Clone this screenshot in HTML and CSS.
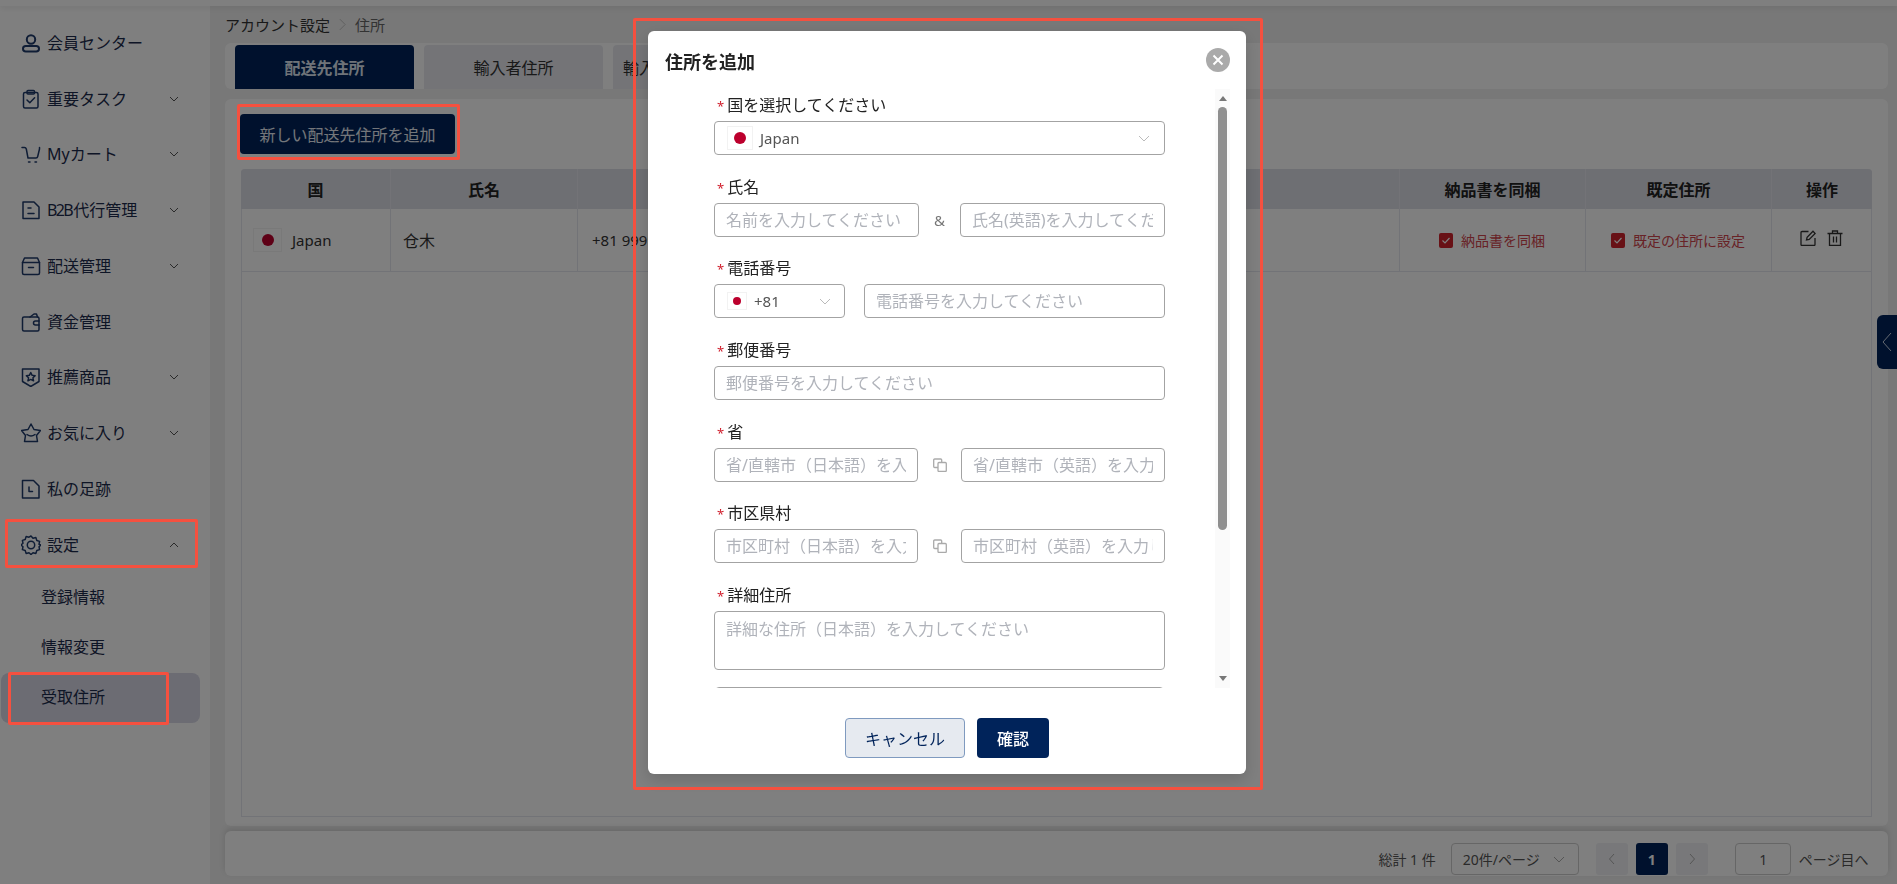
FILE: index.html
```html
<!DOCTYPE html>
<html lang="ja">
<head>
<meta charset="utf-8">
<title>住所</title>
<link rel="stylesheet" href="styles.css">
</head>
<body>
<div class="page">
  <div class="topbar"></div>
  <div class="layout">
    <aside class="sidebar">
      <div class="nav-item"><svg class="nav-icon icon-bold" viewBox="0 0 20 20"><circle cx="10" cy="6.500" r="4.200"/><rect x="2" y="13" width="16" height="5.500" rx="2.800"/></svg><span>会員センター</span></div>
      <div class="nav-item"><svg class="nav-icon" viewBox="0 0 20 20"><rect x="2.500" y="3.500" width="14.500" height="15.500" rx="1.500"/><rect x="6" y="1.500" width="7.500" height="3.500" rx="1"/><path d="M6 11l2.800 2.800 4.800-5"/></svg><span>重要タスク</span><svg class="chev" viewBox="0 0 10 10"><path d="M1 3l4 4 4-4"/></svg></div>
      <div class="nav-item"><svg class="nav-icon" viewBox="0 0 20 20"><path d="M1 3.500h2.500c1 0 1.500.5 1.800 1.500L7 14h8c1 0 1.500-.5 1.700-1.500L18.500 5V3.500"/><path class="dot" d="M7.500 18h1.500M14 18h1.500"/></svg><span>Myカート</span><svg class="chev" viewBox="0 0 10 10"><path d="M1 3l4 4 4-4"/></svg></div>
      <div class="nav-item"><svg class="nav-icon" viewBox="0 0 20 20"><path d="M2 2h11l5 5v11.500H2z"/><path d="M7 8h3M7 13.500h6"/></svg><span><span class="tight">B2B</span>代行管理</span><svg class="chev" viewBox="0 0 10 10"><path d="M1 3l4 4 4-4"/></svg></div>
      <div class="nav-item"><svg class="nav-icon" viewBox="0 0 20 20"><path d="M1.500 6.500V17A1.500 1.500 0 0 0 3 18.500h14a1.500 1.500 0 0 0 1.500-1.500V6.500"/><path d="M1.500 6.500L3.500 2h13l2 4.500z"/><path d="M7.500 11.500h5"/></svg><span>配送管理</span><svg class="chev" viewBox="0 0 10 10"><path d="M1 3l4 4 4-4"/></svg></div>
      <div class="nav-item"><svg class="nav-icon" viewBox="0 0 20 20"><rect x="1.500" y="5" width="16.500" height="14" rx="1.500"/><path d="M9 5l4-3h2.500l1 3"/><path d="M18 9h-3.500a2 2 0 0 0 0 4H18"/></svg><span>資金管理</span></div>
      <div class="nav-item"><svg class="nav-icon" viewBox="0 0 20 20"><path d="M1.500 2h16.500v12.500l-8.250 5-8.250-5z"/><path d="M9.750 5.500l1.400 2.800 3 .4-2.200 2.100.6 3-2.800-1.400-2.800 1.400.6-3-2.200-2.100 3-.4z"/></svg><span>推薦商品</span><svg class="chev" viewBox="0 0 10 10"><path d="M1 3l4 4 4-4"/></svg></div>
      <div class="nav-item"><svg class="nav-icon" viewBox="0 0 20 20"><path d="M10 1l3 5.500 6.500 1-4 5 1 6H3.500l1-6-4-5 6.500-1z"/><path d="M6 11.500q4 3 8 0"/></svg><span>お気に入り</span><svg class="chev" viewBox="0 0 10 10"><path d="M1 3l4 4 4-4"/></svg></div>
      <div class="nav-item"><svg class="nav-icon" viewBox="0 0 20 20"><path d="M1.500 1.500h11l5.500 5.500v12H1.500z"/><path d="M8 8v4.500h3.500"/></svg><span>私の足跡</span></div>
      <div class="nav-item"><svg class="nav-icon" viewBox="0 0 20 20"><path d="M10 1l2 2.200 2.900-.6.900 2.900 2.800.9-.6 2.900L20 10l-2 1.700.6 2.900-2.800.9-.9 2.900-2.900-.6L10 19.500l-2-1.700-2.900.6-.9-2.900-2.800-.9.6-2.900L0 10l2-1.700-.6-2.900 2.800-.9.900-2.900 2.900.6z"/><circle cx="10" cy="10" r="3.700"/></svg><span>設定</span><svg class="chev" viewBox="0 0 10 10"><path d="M1 7l4-4 4 4"/></svg></div>
      <div class="sub-item">登録情報</div>
      <div class="sub-item">情報変更</div>
      <div class="sub-item active">受取住所</div>
    </aside>
    <main class="main">
      <div class="breadcrumb"><span>アカウント設定</span><svg class="crumb-sep" viewBox="0 0 10 14"><path d="M2 1l6 6-6 6"/></svg><span class="crumb-now">住所</span></div>
      <div class="tabs">
        <div class="tab current">配送先住所</div>
        <div class="tab">輸入者住所</div>
        <div class="tab tab-cut">輸入</div>
      </div>
      <section class="card">
        <button class="add-btn" type="button">新しい配送先住所を追加</button>
        <div class="table">
          <div class="thead">
            <div class="th">国</div><div class="th">氏名</div><div class="th">電話番号</div><div class="th">住所</div><div class="th">納品書を同梱</div><div class="th">既定住所</div><div class="th">操作</div>
          </div>
          <div class="trow">
            <div class="td"><span class="flag flag-row"><i></i></span><span class="td-country">Japan</span></div>
            <div class="td td-name">仓木</div>
            <div class="td td-phone">+81 9999999999</div>
            <div class="td"></div>
            <div class="td td-check"><span class="check"><svg viewBox="0 0 14 14"><path d="M3.500 7l2.500 2.500 4.500-5"/></svg></span>納品書を同梱</div>
            <div class="td td-check"><span class="check"><svg viewBox="0 0 14 14"><path d="M3.500 7l2.500 2.500 4.500-5"/></svg></span>既定の住所に設定</div>
            <div class="td td-actions">
              <svg class="act" viewBox="0 0 16 16"><path d="M8.500 1.500H2a1 1 0 0 0-1 1v12a1 1 0 0 0 1 1h12a1 1 0 0 0 1-1V8"/><path d="M6.500 10l.6-2.600L13 1.300l2.200 2.200L9.200 9.500z"/></svg>
              <svg class="act" viewBox="0 0 16 16"><path d="M.5 3.500h15M5.500 3.500V1h5v2.500"/><path d="M2.500 3.500v12h11v-12"/><path d="M6.500 6.500v6M9.500 6.500v6"/></svg>
            </div>
          </div>
        </div>
      </section>
      <footer class="pager">
        <span class="pg-total">総計 1 件</span>
        <div class="pg-size"><span>20件/ページ</span><svg class="pg-chev" viewBox="0 0 10 10"><path d="M0 3l5 5 5-5"/></svg></div>
        <div class="pg-btn"><svg class="pg-arrow" viewBox="0 0 8 12"><path d="M6 1L1.500 6 6 11"/></svg></div>
        <div class="pg-btn pg-on">1</div>
        <div class="pg-btn"><svg class="pg-arrow" viewBox="0 0 8 12"><path d="M2 1l4.500 5L2 11"/></svg></div>
        <div class="pg-jump">1</div>
        <span class="pg-text">ページ目へ</span>
      </footer>
    </main>
  </div>
  <div class="side-toggle"><svg viewBox="0 0 10 20"><path d="M9 1L1 10l8 9"/></svg></div>
</div>

<div class="overlay"></div>

<div class="modal">
  <header class="modal-head">
    <h2 class="modal-title">住所を追加</h2>
    <span class="modal-close"><svg viewBox="0 0 12 12"><path d="M1.500 1.500l9 9M10.500 1.500l-9 9"/></svg></span>
  </header>
  <div class="modal-body">
    <form class="form">
      <div class="form-item">
        <label class="label"><em>*</em>国を選択してください</label>
        <div class="select"><span class="flag flag-big"><i></i></span><span class="select-text">Japan</span><svg class="sel-chev" viewBox="0 0 10 10"><path d="M0 3l5 5 5-5"/></svg></div>
      </div>
      <div class="form-item">
        <label class="label"><em>*</em>氏名</label>
        <div class="pair"><input class="input" placeholder="名前を入力してください"><span class="joiner">&amp;</span><input class="input" placeholder="氏名(英語)を入力してください"></div>
      </div>
      <div class="form-item">
        <label class="label"><em>*</em>電話番号</label>
        <div class="phone">
          <div class="select select-code"><span class="flag flag-small"><i></i></span><span class="select-text code">+81</span><svg class="sel-chev" viewBox="0 0 10 10"><path d="M0 3l5 5 5-5"/></svg></div>
          <input class="input" placeholder="電話番号を入力してください">
        </div>
      </div>
      <div class="form-item">
        <label class="label"><em>*</em>郵便番号</label>
        <input class="input" placeholder="郵便番号を入力してください">
      </div>
      <div class="form-item">
        <label class="label"><em>*</em>省</label>
        <div class="pair wide"><input class="input" placeholder="省/直轄市（日本語）を入力してください"><span class="joiner"><svg class="copy" viewBox="0 0 14 14"><path d="M8.700 4V2a1 1 0 0 0-1-1H1.700a1 1 0 0 0-1 1v6.500a1 1 0 0 0 1 1H5"/><rect x="5" y="4.500" width="8.300" height="9" rx="1"/></svg></span><input class="input" placeholder="省/直轄市（英語）を入力してください"></div>
      </div>
      <div class="form-item">
        <label class="label"><em>*</em>市区県村</label>
        <div class="pair wide"><input class="input" placeholder="市区町村（日本語）を入力してください"><span class="joiner"><svg class="copy" viewBox="0 0 14 14"><path d="M8.700 4V2a1 1 0 0 0-1-1H1.700a1 1 0 0 0-1 1v6.500a1 1 0 0 0 1 1H5"/><rect x="5" y="4.500" width="8.300" height="9" rx="1"/></svg></span><input class="input" placeholder="市区町村（英語）を入力してください"></div>
      </div>
      <div class="form-item">
        <label class="label"><em>*</em>詳細住所</label>
        <textarea class="input textarea" placeholder="詳細な住所（日本語）を入力してください"></textarea>
      </div>
      <input class="input input-next">
    </form>
    <div class="scrollbar">
      <span class="sb-up"></span>
      <span class="sb-thumb"></span>
      <span class="sb-down"></span>
    </div>
  </div>
  <footer class="modal-foot">
    <button class="btn-cancel" type="button">キャンセル</button>
    <button class="btn-ok" type="button">確認</button>
  </footer>
</div>

<div class="mark mark-modal"></div>
<div class="mark mark-add"></div>
<div class="mark mark-settings"></div>
<div class="mark mark-sub"></div>
</body>
</html>
```
FILE: styles.css
```css
* { box-sizing: border-box; }
html, body { margin: 0; padding: 0; height: 884px; overflow: hidden; }
body { font-family: "Noto Sans", "Noto Sans CJK JP", sans-serif; font-size: 16px; color: #222; background: #fff; }

.page { position: relative; height: 884px; display: flex; flex-direction: column; }
.topbar { height: 6px; background: #fff; box-shadow: 0 2px 6px rgba(0,0,0,.08); position: relative; }
.layout { flex: 1; display: flex; min-height: 0; }

.sidebar { width: 210px; flex: none; background: #fff; padding-top: 9px; color: #1c2b4c; }
.nav-item { height: 55.75px; display: flex; align-items: center; gap: 6px; padding: 0 31px 0 21px; line-height: 24px; }
.tight { letter-spacing: -1.6px; margin-right: 1px; }
.nav-icon { width: 20px; height: 20px; flex: none; fill: none; stroke: #1f3a6b; stroke-width: 1.5; stroke-linejoin: round; stroke-linecap: round; }
.icon-bold { stroke-width: 2; }
.chev { width: 10px; height: 10px; margin-left: auto; fill: none; stroke: #555; stroke-width: 1; }
.sub-item { height: 50px; margin-left: 1px; width: 199px; padding: 0 0 2px 40px; display: flex; align-items: center; border-radius: 8px; line-height: 24px; }
.sub-item.active { background: #d8d9e6; }

.main { flex: 1; min-width: 0; background: #f0f0f0; padding: 0 9px 8px 15px; display: flex; flex-direction: column; }
.breadcrumb { height: 37px; display: flex; align-items: center; font-size: 15px; color: #333; }
.crumb-sep { width: 9px; height: 13px; margin: 0 8px; fill: none; stroke: #bbb; stroke-width: 1; }
.crumb-now { color: #666; }

.tabs { height: 46px; display: flex; align-items: flex-end; gap: 10px; padding-left: 10px; background: #fff; border-radius: 6px; }
.tab { width: 179px; height: 44px; display: flex; align-items: center; justify-content: center; border-radius: 4px 4px 0 0; background: #e8e9ef; color: #333; white-space: nowrap; }
.tab-cut { justify-content: flex-start; padding-left: 10px; }
.tab.current { background: #00235a; color: #dfe7f2; font-weight: 700; }

.card { flex: 1; min-height: 0; margin-top: 10px; background: #fff; border-radius: 6px; padding: 15px 16px 9px 15px; display: flex; flex-direction: column; }
.add-btn { width: 215px; height: 40px; border: 0; border-radius: 4px; background: #00235a; color: #e8edf5; font: inherit; margin: 0; padding: 0; flex: none; }

.table { flex: 1; min-height: 0; margin: 15px 0 0 1px; border: 1px solid #e4e6ee; border-top: 0; border-radius: 4px 4px 0 0; }
.thead, .trow { display: grid; }
.thead { grid-template-columns: 149px 187px 446px 376px 186px 186px 1fr; height: 40px; margin: 0 -1px; background: #dcdee6; border-radius: 4px 4px 0 0; font-weight: 700; color: #222; }
.trow { grid-template-columns: 148px 187px 446px 376px 186px 186px 1fr; height: 63px; border-bottom: 1px solid #e4e6ee; }
.th { display: flex; align-items: center; justify-content: center; border-left: 1px solid #e6e7ee; }
.th:first-child { border-left: 0; }
.th:nth-child(4) { border-left-color: transparent; }
.td { display: flex; align-items: center; border-left: 1px solid #e4e6ee; color: #333; }
.td:first-child { border-left: 0; padding-left: 11px; }
.td:nth-child(4) { border-left-color: transparent; }
.td-name { padding-left: 12px; }
.td-phone { padding-left: 14px; white-space: nowrap; font-size: 15px; }
.td-country { margin-left: 10px; font-size: 15px; }
.td-check { justify-content: center; gap: 8px; padding-right: 1px; font-size: 14px; color: #d0444c; }
.check { width: 14px; height: 15px; border-radius: 2px; background: #d0222c; display: flex; }
.check svg { width: 14px; height: 15px; fill: none; stroke: #fff; stroke-width: 1.2; }
.td-actions { gap: 11px; align-items: flex-start; padding: 21px 0 0 28px; }
.act { width: 16px; height: 16px; fill: none; stroke: #333; stroke-width: 1.3; }

.flag { flex: none; display: flex; align-items: center; justify-content: center; background: #fff; box-shadow: 0 0 0 1px #f2f2f2 inset; }
.flag i { display: block; border-radius: 50%; background: #bc002d; }
.flag-row { width: 29px; height: 24px; }
.flag-row i { width: 12px; height: 12px; }
.flag-big { width: 26px; height: 24px; }
.flag-big i { width: 12px; height: 12px; }
.flag-small { width: 20px; height: 18px; }
.flag-small i { width: 8px; height: 8px; }

.pager { height: 45px; margin-top: 5px; flex: none; background: #fff; border-radius: 6px; padding: 12px 19.500px 1px 0; display: flex; justify-content: flex-end; align-items: center; font-size: 14px; color: #555; box-shadow: 0 -3px 6px rgba(0,0,0,.12); }
.pg-total { margin-right: 15px; }
.pg-size { width: 128px; height: 32px; border: 1px solid #ccc; border-radius: 4px; display: flex; align-items: center; justify-content: space-between; padding: 0 14px 0 11px; }
.pg-chev { width: 10px; height: 10px; fill: none; stroke: #aaa; stroke-width: 1; }
.pg-btn { width: 32px; height: 32px; margin-left: 8px; border-radius: 3px; background: #f0f1f4; display: flex; align-items: center; justify-content: center; }
.pg-size + .pg-btn { margin-left: 17px; }
.pg-arrow { width: 8px; height: 12px; fill: none; stroke: #aaa; stroke-width: 1; }
.pg-on { background: #00235a; color: #fff; font-weight: 700; }
.pg-jump { width: 56px; height: 32px; margin: 0 7.500px 0 27.500px; border: 1px solid #ccc; border-radius: 4px; display: flex; align-items: center; justify-content: center; }

.side-toggle { position: absolute; top: 315px; right: 0; width: 20px; height: 54px; background: #00235a; border-radius: 6px 0 0 6px; display: flex; align-items: center; justify-content: center; }
.side-toggle svg { width: 10px; height: 20px; fill: none; stroke: #c8d2e2; stroke-width: 1; }

.overlay { position: fixed; inset: 0; background: rgba(0,0,0,.5); }

.modal { position: fixed; left: 648px; top: 31px; width: 598px; height: 743px; background: #fff; border-radius: 6px; box-shadow: 0 6px 16px rgba(0,0,0,.15); display: flex; flex-direction: column; }
.modal-head { height: 58px; flex: none; display: flex; justify-content: space-between; padding: 17px 16px 0 17px; }
.modal-title { margin: 0; font-size: 18px; font-weight: 700; line-height: 28px; color: #222; }
.modal-close { width: 24px; height: 24px; border-radius: 50%; background: #aaa; display: flex; align-items: center; justify-content: center; }
.modal-close svg { width: 12px; height: 12px; fill: none; stroke: #fff; stroke-width: 2; }

.modal-body { height: 599px; flex: none; display: flex; justify-content: space-between; padding: 0 16px 0 66px; overflow: hidden; }
.form { width: 451px; flex: none; overflow: hidden; }
.form-item { height: 81.67px; }
.form-item:nth-child(7) { height: 108px; }
.label { display: block; height: 32px; line-height: 33px; color: #222; white-space: nowrap; }
.label em { font-style: normal; color: #d0202e; font-size: 13px; margin: 0 3px 0 3px; }
.input { display: block; width: 100%; height: 34px; min-width: 0; padding: 0 11px 0 11px; border: 1px solid #a3a3a3; border-radius: 4px; font: inherit; color: #333; background: #fff; outline: 0; }
.input::placeholder { color: #b0b3ba; opacity: 1; }
.textarea { height: 59px; padding: 5px 11px; resize: none; line-height: 24px; overflow: hidden; }
.input-next { margin-left: 1px; width: 449px; }
.select { height: 34px; border: 1px solid #a3a3a3; border-radius: 4px; display: flex; align-items: center; padding: 0 15px 0 12px; }
.select-text { margin-left: 7px; color: #555; font-size: 15px; }
.sel-chev { width: 10px; height: 10px; margin-left: auto; fill: none; stroke: #bbb; stroke-width: 1; }
.select-code { width: 131px; flex: none; padding-right: 14px; }
.pair { display: grid; grid-template-columns: 205px 1fr 205px; align-items: center; }
.pair.wide { grid-template-columns: 204px 1fr 204px; }
.joiner { text-align: center; color: #777; font-size: 15px; display: flex; justify-content: center; }
.copy { width: 14px; height: 14px; fill: none; stroke: #aaa; stroke-width: 1.3; }
.phone { display: flex; gap: 19px; }

.scrollbar { width: 15px; flex: none; background: #fafafa; display: flex; flex-direction: column; align-items: center; position: relative; }
.sb-up { margin-top: 7px; width: 0; height: 0; border: 4px solid transparent; border-top: 0; border-bottom: 5px solid #777; }
.sb-thumb { width: 9px; height: 423px; margin-top: 6px; border-radius: 5px; background: #8f8f8f; }
.sb-down { margin-top: auto; margin-bottom: 7px; width: 0; height: 0; border: 4px solid transparent; border-bottom: 0; border-top: 5px solid #777; }

.modal-foot { flex: 1; display: flex; justify-content: flex-start; gap: 12px; padding: 30px 0 0 197px; }
.btn-cancel { width: 120px; height: 40px; margin: 0; background: #e6eaf0; border: 1px solid #7f9abf; border-radius: 4px; color: #00235a; font: inherit; padding: 0; }
.btn-ok { width: 72px; height: 40px; margin: 0; background: #00235a; border: 0; border-radius: 4px; color: #fff; font: inherit; font-weight: 500; padding: 0; }

.mark { position: fixed; border: 3px solid #f5503f; border-radius: 2px; }
.mark-modal { left: 633px; top: 18px; width: 630px; height: 772px; }
.mark-add { left: 237px; top: 104px; width: 223px; height: 56px; }
.mark-settings { left: 5px; top: 519px; width: 193px; height: 49px; }
.mark-sub { left: 8px; top: 672px; width: 161px; height: 53px; }
```
